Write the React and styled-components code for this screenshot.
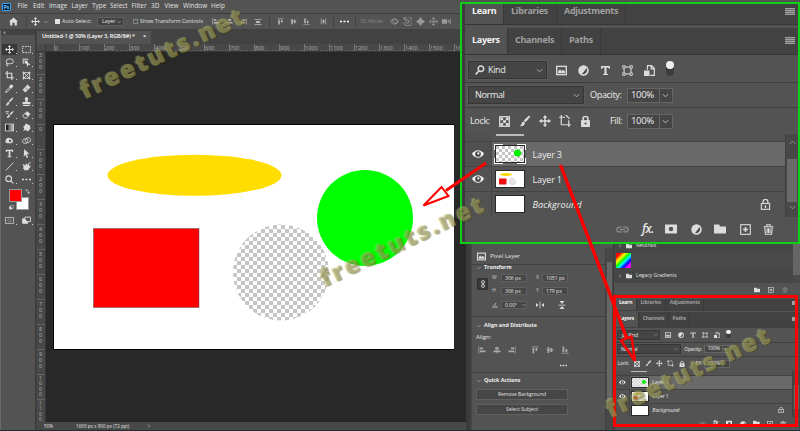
import React from 'react';
import styled, { createGlobalStyle, css } from 'styled-components';

const Global = createGlobalStyle`
  * { box-sizing: border-box; }
  body { margin: 0; background: #282828; overflow: hidden; }
  svg { display: block; flex: none; }
`;

const sans = '"Open Sans", "Noto Sans", sans-serif';
/* Layers panel dimensions are multiples of --u so it can be shown at two scales. */
const u = (n) => `calc(var(--u) * ${n})`;

const line = { fill: 'none', stroke: 'currentColor', strokeWidth: 1.6 };
const glyphs = {
  move: <path d="M8 0l3 3.500H9V7h3.500V5L16 8l-3.500 3V9H9v3.500h2L8 16l-3-3.500h2V9H3.500v2L0 8l3.500-3v2H7V3.500H5z" fill="currentColor" />,
  marquee: <rect x="1" y="2.500" width="14" height="11" {...line} strokeDasharray="3 1.500" />,
  lasso: <g {...line}><ellipse cx="8.500" cy="6" rx="6.500" ry="4.500" /><path d="M4 9c-3 1-2 4 0 3s1 3-1 3" /></g>,
  objsel: <g><path d="M1 1h10v3H4v6H1z" fill="currentColor" opacity=".7" /><rect x="5" y="5" width="5" height="5" fill="currentColor" /><path d="M8 6l7 6-4 .3L9 16z" fill="currentColor" /></g>,
  crop: <path d="M4 0v12h12M0 4h12v12" {...line} strokeWidth="2" />,
  frame: <path d="M1 3h14M1 13h14M2.500 1v14M13.500 1v14M3 3l10 10M13 3L3 13" {...line} />,
  dropper: <g><path d="M10 1.500c2-2 6 2 4 4l-3 3-4-4z" fill="currentColor" /><path d="M8.500 5.500L2 12l-1 3 3-1 6.500-6.500" {...line} /></g>,
  heal: <g><path d="M10 1l5 5-9 9-5-5z" fill="currentColor" /><path d="M7 6l4 4M5.500 8l3 3" stroke="#535353" /></g>,
  brush: <g><path d="M14.500 1c1.500 1-4 7-6 8.500L6.500 7.500C8 5.500 13 0 14.500 1z" fill="currentColor" /><path d="M6 8.500l2 2c-1 4-4 4.500-7 4.500 3-2 2-5.500 5-6.500z" fill="currentColor" /></g>,
  stamp: <path d="M8 0a3.500 3.500 0 0 1 2 6v3h5v4H1V9h5V6a3.500 3.500 0 0 1 2-6zM2 14h12v2H2z" fill="currentColor" />,
  history: <g><path d="M15 2c1 1-3 5-5 7L8 7c1-1 6-6 7-5zM7 8l2 2c-1 3-3 4-6 4 2-2 1-5 4-6z" fill="currentColor" /><path d="M1 3h6M2 6h4" {...line} /></g>,
  eraser: <g><path d="M9 2l6 5-4 4-6-5z" fill="currentColor" /><path d="M5 6l6 5-2.500 3H5l-4-3z" {...line} /></g>,
  gradient: <g><rect x="1" y="2" width="14" height="12" {...line} /><path d="M2 3h3v10H2z" fill="#111" /><path d="M5 3h3v10H5z" fill="#555" /><path d="M8 3h3v10H8z" fill="#888" /><path d="M11 3h3v10h-3z" fill="#bbb" /></g>,
  smudge: <path d="M6 1l8 3 1 6-5 5-4-3-4 3 2-5-2-4 3-1z" fill="currentColor" />,
  blob: <g><path d="M1 8c1-5 6-6 8-4 6 0 7 9 1 9S0 13 1 8z" fill="currentColor" /><circle cx="9" cy="8.500" r="2" fill="#444" /></g>,
  pen: <g {...line}><path d="M1 9c0-4 7-6 9-2s-3 7-6 6-3-3-3-4zM6 8c0-5 7-6 9-3s-2 7-5 7-4-2-4-4z" /></g>,
  type: <path d="M1.500 1.500h13v4h-1.700L12 3.500H9.500v9.300l2 .4v1.300h-7v-1.300l2-.4V3.500H4L3.200 5.500H1.500z" fill="currentColor" />,
  arrow: <path d="M4 0l9 9-4.500.5L11 15l-2.500 1L6 10.500 3 13.500z" fill="currentColor" />,
  slash: <path d="M1.500 15L15 1" {...line} />,
  hand: <path d="M3 8L1 5l2-1 3 3 0-4 2-.5 1 3.500 2-4 2 1-1 4 3-1v2l-4 6-6 1-3-4zM12 1l3-1v3z" fill="currentColor" />,
  search: <g {...line} strokeWidth="2.400"><circle cx="9.500" cy="6" r="4.500" /><path d="M6.300 9.500L1 15" /></g>,
  zoom: <g {...line} strokeWidth="2"><circle cx="6.500" cy="6.500" r="5" /><path d="M10 10l5 5" /></g>,
  dots: <path d="M0 6.500h3.500v3H0zM6.200 6.500h3.500v3H6.200zM12.500 6.500H16v3h-3.500z" fill="currentColor" />,
  mask: <g><rect x="1" y="2.500" width="14" height="11" {...line} /><circle cx="8" cy="8" r="3" {...line} strokeDasharray="1.500 1" /></g>,
  screens: <g {...line}><path d="M5 2h10v8H5z" /><path d="M5 5H1v8h9v-3" fill="currentColor" /></g>,
  home: <path d="M8 1l8 7h-2v7h-4v-5H6v5H2V8H0z" fill="currentColor" />,
  chev: <path d="M2 5l6 6 6-6" {...line} strokeWidth="2" />,
  chevUp: <path d="M2 11l6-6 6 6" {...line} strokeWidth="2" />,
  chevR: <path d="M5 2l6 6-6 6" {...line} strokeWidth="2" />,
  alignL: <path d="M1 1h1.500v14H1zM4 3h6v3.500H4zM4 9h11v3.500H4z" fill="currentColor" />,
  alignC: <path d="M7.200 1h1.600v2H12v3.500H8.800V9H15v3.500H8.800V15H7.200v-2.500H1V9h6.200V6.500H4V3h3.200z" fill="currentColor" />,
  alignR: <path d="M13.500 1H15v14h-1.500zM6 3h6v3.500H6zM1 9h11v3.500H1z" fill="currentColor" />,
  alignT: <path d="M1 1h14v1.500H1zM3 4h3.500v11H3zM9 4h3.500v6H9z" fill="currentColor" />,
  alignM: <path d="M1 7.200h2V2h3.500v5.200H9V4h3.500v3.200H15v1.600h-2.500V12H9V8.800H6.500V14H3V8.800H1z" fill="currentColor" />,
  alignB: <path d="M1 13.500h14V15H1zM3 1h3.500v11H3zM9 6h3.500v6H9z" fill="currentColor" />,
  distV: <path d="M1 2h14v1.500H1zM4 6h8v4H4zM1 12.500h14V14H1z" fill="currentColor" />,
  distH: <path d="M2 1h1.500v14H2zM6 4h4v8H6zM12.500 1H14v14h-1.500z" fill="currentColor" />,
  orbit: <g {...line}><path d="M1 8c3-6 11-6 13 0M15 8c-3 6-11 6-13 0M4 7l6 5 4-5-6-4z" /></g>,
  roll: <g {...line}><circle cx="8" cy="8" r="3" /><path d="M2 3a8 8 0 1 1-1 7M2 0v4h4" /></g>,
  slide: <path d="M8 0l3 4H5zM8 16l3-4H5zM0 8l4-3v6zM16 8l-4-3v6zM6 6h4v4H6z" fill="currentColor" />,
  diamond: <path d="M8 0l3 4-1 2 2-1 4 3-4 3-2-1 1 2-3 4-3-4 1-2-2 1-4-3 4-3 2 1-1-2z" fill="currentColor" />,
  camera: <path d="M0 4h9v8H0zM10 7l3-2v6l-3-2zM14 3h1.500v10H14z" fill="currentColor" />,
  image: <g><rect x="1" y="2" width="14" height="12" {...line} strokeWidth="2" /><path d="M3 12V9l3-3 2 3 2-2 3 2v3z" fill="currentColor" /></g>,
  adjust: <g><circle cx="8" cy="8" r="6.800" {...line} fill="currentColor" /><path d="M12.600 4.500A6 6 0 0 1 6 13.200z" fill="#474747" /></g>,
  shape: <g {...line}><rect x="3" y="3" width="10" height="10" /><path d="M1 1h3.500v3.500H1zM11.500 1H15v3.500h-3.500zM1 11.500h3.500V15H1zM11.500 11.500H15V15h-3.500z" fill="#535353" strokeWidth="1.300" /></g>,
  smart: <g><path d="M5 7V1h6l4 4v10H9M10.500 1v4.500H15" {...line} strokeWidth="1.800" /><rect x="0" y="8" width="8" height="8" fill="currentColor" /></g>,
  checker: <g><rect x="1" y="1" width="14" height="14" {...line} strokeWidth="1.800" /><path d="M2 2h4v4H2zM10 2h4v4h-4zM6 6h4v4H6zM2 10h4v4H2zM10 10h4v4h-4z" fill="currentColor" /></g>,
  artboard: <path d="M3 0v13h13M0 3h8M13 7v9M9 0l5 5" {...line} />,
  lock: <g><rect x="1.500" y="6" width="13" height="10" fill="currentColor" /><path d="M4.500 7V4a3.500 3.500 0 0 1 7 0v3" {...line} strokeWidth="2.200" /><circle cx="8" cy="11" r="1.500" fill="#474747" /></g>,
  lockLine: <g {...line}><rect x="2" y="6.500" width="12" height="8.500" /><path d="M4.500 6V4a3.500 3.500 0 0 1 7 0v2M8 9v4" strokeWidth="1.800" /></g>,
  eye: <g><path d="M0 8c4-6.500 12-6.500 16 0-4 6.500-12 6.500-16 0z" fill="currentColor" /><circle cx="8" cy="8" r="3.800" fill="#474747" /><circle cx="8.500" cy="7.300" r="1.500" fill="currentColor" /></g>,
  link: <g {...line}><path d="M7 5H4a3 3 0 0 0 0 6h3M9 5h3a3 3 0 0 1 0 6H9M4.500 8h7" /></g>,
  chain: <g {...line}><rect x="5" y="1" width="6" height="6" rx="3" /><rect x="5" y="9" width="6" height="6" rx="3" /><path d="M8 5v6" /></g>,
  maskAdd: <path d="M0 2h16v12H0zM8 5a3 3 0 1 0 0 6 3 3 0 0 0 0-6z" fillRule="evenodd" fill="currentColor" />,
  folder: <path d="M0 2h7l1 2.500h8V14H0z" fill="currentColor" />,
  plus: <g {...line}><rect x="1" y="1" width="14" height="14" /><path d="M8 4.500v7M4.500 8h7" strokeWidth="2.200" /></g>,
  trash: <g {...line}><path d="M1 4h14M5.500 3.500V1h5v2.500M2.500 4l1 11h9l1-11" /><path d="M6 6v7M8 6v7M10.200 6v7" /></g>,
  angle: <g {...line}><path d="M15 14H1L11 2" /><path d="M7 7c3 1 4 4 4 7" /></g>,
  flipH: <path d="M0 4l5 4-5 4zM16 4l-5 4 5 4zM7.300 1h1.500v14H7.300z" fill="currentColor" />,
  flipV: <path d="M3 0h10L8 6zM3 16h10l-5-6zM1 7.300h14v1.500H1z" fill="currentColor" />,
  swap: <path d="M5 1v4h6v6h4l-5 5M5 0L1 4l4 4M7 10l4 5 4-5" {...line} />,
};

const Svg = styled.svg`
  width: ${(p) => p.$w};
  height: ${(p) => p.$w};
  color: ${(p) => p.$c || '#dcdcdc'};
`;
const Icon = ({ n, w = '8px', c }) => <Svg viewBox="0 0 16 16" $w={w} $c={c}>{glyphs[n]}</Svg>;

/* ---------- application frame ---------- */
const Screen = styled.div`
  position: relative;
  width: 800px;
  height: 431px;
  overflow: hidden;
  display: grid;
  grid-template-rows: 13px 17px 400px 1px;
  background: #1d3036;
  color: #e2e2e2;
  font: 6px/1 ${sans};
  white-space: nowrap;
`;
const MenuBar = styled.nav`
  display: flex;
  align-items: center;
  background: #535353;
  padding-left: 2px;
  font-size: 6.400px;
`;
const Logo = styled.div`
  width: 9px;
  height: 8px;
  border: 1px solid #31a8ff;
  border-radius: 1px;
  background: #001e36;
  color: #7cc8ff;
  font: bold 5px/6px ${sans};
  text-align: center;
  margin-right: 6.500px;
`;
const MenuItem = styled.span`width: ${(p) => p.$w}px;`;
const OptionsBar = styled.div`
  display: flex;
  align-items: center;
  background: #535353;
  border-top: 1px solid #3d3d3d;
  border-bottom: 1px solid #414141;
  padding-left: 9px;
  font-size: 5.300px;
`;
const Slot = styled.div`
  width: ${(p) => p.$w}px;
  flex: none;
  display: flex;
  align-items: center;
  color: ${(p) => (p.$dim ? '#858585' : '#e2e2e2')};
`;
const Check = styled.span`
  width: 5px;
  height: 5px;
  border: 1px solid ${(p) => (p.$on ? '#e0e0e0' : '#858585')};
  background: ${(p) => (p.$on ? '#e0e0e0' : 'transparent')};
  margin-right: 2px;
`;
const Select = styled.div`
  width: 27px;
  height: 9px;
  display: flex;
  align-items: center;
  justify-content: space-between;
  padding: 0 2px 0 4px;
  background: #424242;
  border: 1px solid #5e5e5e;
`;
const Sep = styled.i`width: 1px; height: 13px; background: #434343; margin-right: ${(p) => p.$r || 0}px;`;

const Workspace = styled.main`
  display: grid;
  grid-template-columns: 36px 430px 5px 142px 1fr;
  background: #383838;
  min-height: 0;
`;

/* ---------- toolbox ---------- */
const Toolbox = styled.aside`
  background: #535353;
  border-left: 1px solid #6a6a6a;
  border-right: 1px solid #3c3c3c;
  display: flex;
  flex-direction: column;
`;
const ToolboxTop = styled.div`
  height: 13px;
  color: #ddd;
  font-size: 6px;
  line-height: 4px;
  padding-left: 2px;
  background: linear-gradient(#424242 5px, #535353 5px);
`;
const ToolGrid = styled.div`
  display: grid;
  grid-template-columns: 17px 16px;
  grid-auto-rows: 13px;
`;
const Tool = styled.div`
  position: relative;
  display: grid;
  place-items: center;
  margin: 1px;
  background: ${(p) => (p.$on ? '#383838' : 'transparent')};
  &::after {
    content: '';
    position: absolute;
    right: 0;
    bottom: 1px;
    width: 1px;
    height: 1px;
    background: #ccc;
  }
`;
const Swatches = styled.div`
  position: relative;
  height: 27px;
  margin-left: 8px;
  margin-top: 1px;
`;
const Swatch = styled.i`
  position: absolute;
  left: ${(p) => p.$x}px;
  top: ${(p) => p.$y}px;
  width: 13px;
  height: 13px;
  background: ${(p) => p.$c};
  border: 1px solid #999;
`;
const SwapMark = styled.div`position: absolute; left: ${(p) => p.$x}px; top: ${(p) => p.$y}px;`;

/* ---------- document ---------- */
const Doc = styled.section`
  display: grid;
  grid-template-columns: 9px 1fr;
  grid-template-rows: 14px 8px 370px 8px;
  padding-left: 1px;
  background: #424242;
  min-width: 0;
`;
const TabStrip = styled.div`grid-column: 1 / -1; display: flex; padding-top: 1px;`;
const DocTab = styled.div`
  width: 114px;
  padding: 0 5px 1px;
  display: flex;
  justify-content: space-between;
  align-items: center;
  background: #535353;
  font-weight: 600;
  font-size: 5.550px;
  letter-spacing: -0.130px;
  color: #fff;
`;
const Corner = styled.div`background: #4b4b4b; border: solid #3a3a3a; border-width: 0 1px 1px 0;`;
const RulerH = styled.div`
  display: flex;
  padding-left: 8px;
  background: #484848;
  border-bottom: 1px solid #383838;
  overflow: hidden;
  font: 5.500px/9px "Noto Sans", sans-serif;
  color: #aaa;
`;
const TickH = styled.span`
  width: 25px;
  flex: none;
  border-left: 1px solid #777;
  background: repeating-linear-gradient(90deg, #676767 0 1px, transparent 1px 2.500px) bottom / 100% 1px no-repeat;
`;
const RulerV = styled.div`
  background: #484848;
  border-right: 1px solid #383838;
  overflow: hidden;
  font: 5.300px/6px "Noto Sans", sans-serif;
  color: #aaa;
`;
const TickV = styled.span`
  display: flex;
  flex-direction: column;
  height: ${(p) => p.$h || 25}px;
  padding: 1px 0 0 2px;
  border-top: 1px solid #646464;
  ${(p) => p.$long && css`font-size: 4.800px; line-height: 5.300px;`}
  ${(p) => p.$h && css`border: 0; padding-top: 0;`}
`;
const Pasteboard = styled.div`background: #282828; padding: 72px 0 0 7px;`;
const Artboard = styled.div`
  width: 401px;
  height: 226px;
  border: 1px solid #050505;
  border-right: 0;
  background: #fff;
  svg { width: 400px; height: 225px; }
`;
const Status = styled.footer`
  grid-column: 1 / -1;
  display: flex;
  align-items: center;
  background: #484848;
  padding-left: 7px;
  font-size: 4.600px;
`;

const Gutter = styled.div`background: #3b3b3b; border-right: 1px solid #444;`;

/* ---------- properties ---------- */
const Properties = styled.section`
  background: #535353;
  display: grid;
  grid-template-columns: 1fr 8px;
  padding-top: 218px;
  border-left: 1px solid #464646;
`;
const PropBody = styled.div`min-width: 0;`;
const PropRow = styled.div`
  display: flex;
  align-items: center;
  height: ${(p) => p.$h}px;
  padding-left: ${(p) => p.$l || 5}px;
  gap: ${(p) => p.$g || 0}px;
  ${(p) => p.$line && css`border-top: 1px solid #424242;`}
  ${(p) => p.$bold && css`font-weight: 700; font-size: 5.300px; color: #eee;`}
  ${(p) => p.$pt && css`padding-top: ${p.$pt}px;`}
`;
const Fields = styled.div`
  display: grid;
  grid-template-columns: 15px 9px 35px 6px 26px;
  grid-template-rows: 13px 13px 15px;
  align-items: center;
  padding-left: 5px;
  height: 45px;
  color: #ccc;
  font-size: 5.100px;
`;
const ChainBox = styled.div`
  grid-row: 1 / 3;
  width: 11px;
  height: 12px;
  display: grid;
  place-items: center;
  background: #383838;
  border: 1px solid #303030;
`;
const Input = styled.div`
  width: 26px;
  height: 8px;
  line-height: 6px;
  padding-left: 3px;
  display: flex;
  justify-content: space-between;
  align-items: center;
  color: #e6e6e6;
  background: #464646;
  border: 1px solid #5f5f5f;
`;
const PropButton = styled.div`
  width: 92px;
  height: 11px;
  margin: 0 0 3.500px 4px;
  background: #464646;
  border: 1px solid #606060;
  text-align: center;
  line-height: 9px;
  font-size: 5px;
`;
const ScrollTrack = styled.div`background: #484848; border-left: 1px solid #404040; padding: 9px 1px; color: #777;`;
const ScrollThumb = styled.div`height: ${(p) => p.$h}; margin-top: ${(p) => p.$mt || '5px'}; background: #666;`;

/* ---------- right dock ---------- */
const Dock = styled.section`
  background: #535353;
  border-left: 1px solid #3a3a3a;
  padding-top: 208px;
  overflow: hidden;
`;
const GradientList = styled.div`
  display: grid;
  grid-template-columns: 1fr 7px;
  height: 45px;
  background: #4a4a4a;
`;
const GradientRow = styled.div`
  height: 15px;
  display: flex;
  align-items: center;
  gap: 4px;
  padding-left: 4px;
  background: #464646;
  font-size: 5.100px;
`;
const Rainbow = styled.div`
  width: 15px;
  height: 15px;
  margin-left: 2px;
  background: linear-gradient(135deg, #f00 15%, #ff0 32%, #0f0 47%, #0ff 57%, #00f 72%, #f0f 85%, #f0f);
`;
const GradientFoot = styled.div`
  height: 13px;
  display: flex;
  justify-content: flex-end;
  align-items: center;
  gap: 8px;
  padding-right: 12px;
`;
const Spacer = styled.div`height: 3px;`;
const DockedLayers = styled.div`padding-left: 1px; background: #444;`;

/* ---------- layers panel ---------- */
const Panel = styled.div`
  --u: ${(p) => p.$u}px;
  width: ${u(333)};
  height: ${u(238)};
  background: #535353;
  display: flex;
  flex-direction: column;
  font: 500 ${u(9.1)}/1 ${sans};
  letter-spacing: ${u(-0.38)};
  color: #ececec;
  overflow: hidden;
`;
const Tabs = styled.div`
  display: flex;
  height: ${(p) => u(p.$h)};
  flex: none;
  background: #424242;
  margin-bottom: ${(p) => u(p.$mb || 0)};
  box-shadow: 0 ${u(1)} 0 #353535;
`;
const Tab = styled.div`
  width: ${(p) => u(p.$w)};
  padding-left: ${(p) => u(p.$l)};
  display: flex;
  align-items: center;
  padding-bottom: ${(p) => u(p.$up || 0)};
  font-weight: 700;
  font-size: ${u(9)};
  letter-spacing: ${u(-0.3)};
  color: ${(p) => (p.$on ? '#f5f5f5' : '#a0a0a0')};
  background: ${(p) => (p.$on ? '#535353' : '#424242')};
  border-right: ${u(1)} solid #383838;
`;
const Burger = styled.i`
  width: ${u(10)};
  height: ${u(7)};
  margin: ${(p) => u(p.$t)} ${u(3)} 0 auto;
  background: repeating-linear-gradient(#a0a0a0 0 ${u(1)}, #6c6c6c ${u(1)} ${u(2)});
`;
const PRow = styled.div`
  height: ${(p) => u(p.$h)};
  flex: none;
  display: flex;
  align-items: center;
  padding-left: ${(p) => u(p.$l ?? 3)};
  padding-top: ${(p) => u(p.$pt || 0)};
  border-bottom: ${(p) => (p.$line ? u(1) : 0)} solid #3f3f3f;
`;
const Cell = styled.div`
  width: ${(p) => u(p.$w)};
  flex: none;
  display: flex;
  align-items: center;
`;
const Drop = styled.div`
  width: ${(p) => u(p.$w)};
  height: ${u(17.5)};
  margin-right: ${(p) => u(p.$r)};
  flex: none;
  display: flex;
  align-items: center;
  justify-content: space-between;
  padding: 0 ${u(3)} 0 ${u(6)};
  background: #454545;
  border: ${u(1)} solid #363636;
  box-shadow: 0 0 0 ${u(0.6)} #606060;
`;
const DropLabel = styled.span`display: flex; gap: ${u(3)}; align-items: center;`;
const Percent = styled.div`
  width: ${u(46)};
  height: ${u(15)};
  display: flex;
  align-items: center;
  justify-content: space-between;
  padding: 0 ${u(3)} 0 ${u(3.5)};
  font-size: ${u(9.6)};
  border: ${u(1)} solid #656565;
  background: linear-gradient(90deg, #454545 ${u(31)}, #656565 ${u(31)} ${u(32)}, #454545 ${u(32)});
`;
const Toggle = styled.div`
  width: ${u(8)};
  height: ${u(15)};
  border-radius: ${u(4)};
  background: #3d3d3d;
  margin-top: ${u(-4)};
  &::before {
    content: '';
    display: block;
    width: ${u(8)};
    height: ${u(8)};
    border-radius: 50%;
    background: #f0f0f0;
  }
`;
const ListArea = styled.div`
  display: grid;
  grid-template-columns: 1fr ${u(13)};
  height: ${u(83)};
  flex: none;
  border-bottom: ${u(1)} solid #404040;
`;
const Rows = styled.div`min-width: 0;`;
const Remnant = styled.div`
  height: ${u(7)};
  border-left: ${u(27)} solid #505050;
  &::before {
    content: '';
    display: block;
    width: ${u(28)};
    height: ${u(1.5)};
    margin-left: ${u(4)};
    background: #bbb;
  }
`;
const LayerRow = styled.div`
  height: ${u(25.2)};
  display: flex;
  align-items: center;
  border-top: ${u(1)} solid #434343;
  background: ${(p) => (p.$on ? `linear-gradient(90deg, #505050 ${u(27)}, #6a6a6a ${u(27)})` : '#535353')};
`;
const EyeCell = styled.div`
  width: ${u(27)};
  height: 100%;
  display: flex;
  align-items: center;
  padding-left: ${u(7)};
  border-right: ${u(1)} solid #454545;
`;
const Thumb = styled.div`
  width: ${u(32)};
  height: ${u(20)};
  margin: 0 ${u(6.5)} 0 ${u(2)};
  padding: ${u(2)};
  ${(p) => p.$on && css`
    background:
      linear-gradient(#fff 0 0) left top / ${u(9)} ${u(1)},
      linear-gradient(#fff 0 0) right top / ${u(9)} ${u(1)},
      linear-gradient(#fff 0 0) left bottom / ${u(9)} ${u(1)},
      linear-gradient(#fff 0 0) right bottom / ${u(9)} ${u(1)},
      linear-gradient(#fff 0 0) left top / ${u(1)} ${u(6)},
      linear-gradient(#fff 0 0) left bottom / ${u(1)} ${u(6)},
      linear-gradient(#fff 0 0) right top / ${u(1)} ${u(6)},
      linear-gradient(#fff 0 0) right bottom / ${u(1)} ${u(6)};
    background-repeat: no-repeat;
  `}
  svg { width: ${u(28)}; height: ${u(16)}; background: #fff; outline: ${u(1)} solid #292929; }
`;
const LayerName = styled.span`
  flex: 1;
  padding-top: ${u(1)};
  font-style: ${(p) => (p.$italic ? 'italic' : 'normal')};
  letter-spacing: ${(p) => u(p.$italic ? 0.08 : -0.2)};
`;
const LockCell = styled.span`margin-right: ${u(14)};`;
const ListScroll = styled.div`
  background: #484848;
  border-left: ${u(1)} solid #404040;
  padding: ${u(5)} ${u(1)} 0 ${u(1)};
  display: flex;
  flex-direction: column;
  align-items: center;
`;
const ListThumb = styled.div`width: ${u(10)}; height: ${u(43)}; margin: ${u(13)} 0 ${u(2)}; background: #6a6a6a;`;
const Fx = styled.span`font: italic 600 ${u(12)}/1 ${sans}; letter-spacing: ${u(-0.6)};`;

const Thumbnail = ({ kind }) => (
  <svg viewBox="0 0 28 16" preserveAspectRatio="none">
    {kind === 'green' && (
      <>
        <defs>
          <pattern id="tc" width="6" height="6" patternUnits="userSpaceOnUse">
            <rect width="6" height="6" fill="#fff" /><path d="M0 0h3v3H0zM3 3h3v3H3z" fill="#c4c4c4" />
          </pattern>
        </defs>
        <rect width="28" height="16" fill="url(#tc)" />
        <circle cx="21.500" cy="7" r="3.600" fill="#00f000" />
      </>
    )}
    {kind === 'all' && (
      <>
        <ellipse cx="10" cy="3.500" rx="6" ry="1.500" fill="#ffd800" />
        <path d="M3 7.500h7.500v6H3z" fill="#f01010" />
        <circle cx="16.500" cy="10.500" r="3.400" fill="#e3e3e8" stroke="#bbb" strokeWidth=".5" strokeDasharray="1 1" />
        <circle cx="21.500" cy="7" r="3.300" fill="#fff" />
      </>
    )}
  </svg>
);

const Pct = () => <Percent>100%<Icon n="chev" w={u(7)} c="#ccc" /></Percent>;

const LayersPanel = ({ scale }) => (
  <Panel $u={scale}>
    <Tabs $h={20} $mb={4}>
      <Tab $w={39} $l={7} $up={8} $on>Learn</Tab>
      <Tab $w={53} $l={7} $up={8}>Libraries</Tab>
      <Tab $w={69} $l={7} $up={8}>Adjustments</Tab>
      <Burger $t={4} />
    </Tabs>
    <Tabs $h={26}>
      <Tab $w={43} $l={7} $up={4} $on>Layers</Tab>
      <Tab $w={54} $l={7} $up={4}>Channels</Tab>
      <Tab $w={39} $l={7} $up={4}>Paths</Tab>
      <Burger $t={9} />
    </Tabs>
    <PRow $h={29} $pt={4} $line>
      <Drop $w={79} $r={9}><DropLabel><Icon n="search" w={u(10)} />Kind</DropLabel><Icon n="chev" w={u(7)} c="#bbb" /></Drop>
      {['image', 'adjust', 'type', 'shape', 'smart'].map((n) => <Cell key={n} $w={22}><Icon n={n} w={u(11)} /></Cell>)}
      <Toggle />
    </PRow>
    <PRow $h={25} $line>
      <Drop $w={116} $r={6}>Normal<Icon n="chev" w={u(7)} c="#bbb" /></Drop>
      <Cell $w={36.5}>Opacity:</Cell>
      <Pct />
    </PRow>
    <PRow $h={26} $l={5}>
      <Cell $w={29}>Lock:</Cell>
      <Cell $w={20}><Icon n="checker" w={u(11)} /></Cell>
      <Cell $w={20}><Icon n="brush" w={u(12)} /></Cell>
      <Cell $w={20}><Icon n="move" w={u(12)} /></Cell>
      <Cell $w={21}><Icon n="artboard" w={u(12)} /></Cell>
      <Cell $w={30}><Icon n="lock" w={u(11)} /></Cell>
      <Cell $w={16.5}>Fill:</Cell>
      <Pct />
    </PRow>
    <ListArea>
      <Rows>
        <Remnant />
        <LayerRow $on>
          <EyeCell><Icon n="eye" w={u(12)} c="#f4f4f4" /></EyeCell>
          <Thumb $on><Thumbnail kind="green" /></Thumb><LayerName>Layer 3</LayerName>
        </LayerRow>
        <LayerRow>
          <EyeCell><Icon n="eye" w={u(12)} c="#f4f4f4" /></EyeCell>
          <Thumb><Thumbnail kind="all" /></Thumb><LayerName>Layer 1</LayerName>
        </LayerRow>
        <LayerRow>
          <EyeCell />
          <Thumb><Thumbnail /></Thumb><LayerName $italic>Background</LayerName>
          <LockCell><Icon n="lockLine" w={u(11)} /></LockCell>
        </LayerRow>
      </Rows>
      <ListScroll><Icon n="chevUp" w={u(7)} c="#999" /><ListThumb /><Icon n="chev" w={u(7)} c="#aaa" /></ListScroll>
    </ListArea>
    <PRow $h={24} $l={151}>
      <Cell $w={26}><Icon n="link" w={u(13)} c="#8b8b8b" /></Cell>
      <Cell $w={23}><Fx>fx.</Fx></Cell>
      <Cell $w={26}><Icon n="maskAdd" w={u(12)} /></Cell>
      <Cell $w={23}><Icon n="adjust" w={u(11)} /></Cell>
      <Cell $w={26}><Icon n="folder" w={u(12)} /></Cell>
      <Cell $w={23}><Icon n="plus" w={u(11)} /></Cell>
      <Icon n="trash" w={u(11)} />
    </PRow>
  </Panel>
);

/* ---------- annotations laid over the window ---------- */
const Callout = styled.div`
  position: absolute;
  left: 460px;
  top: 2px;
  width: 340px;
  height: 242px;
  padding-left: 3px;
  border: 2px solid #10cf18;
  background: #3b3b3b;
  overflow: hidden;
`;
const Marker = styled.div`
  position: absolute;
  left: 613px;
  top: 295px;
  width: 185px;
  height: 132px;
  border: 3px solid #f00;
`;
const Arrows = styled.svg`
  position: absolute;
  inset: 0;
  width: 800px;
  height: 431px;
`;
const Watermark = styled.span`
  position: absolute;
  left: ${(p) => p.$x}px;
  top: ${(p) => p.$y}px;
  transform-origin: 0 100%;
  transform: rotate(-25.500deg);
  font: 800 24px/25px "Open Sans", sans-serif;
  letter-spacing: 2.500px;
  color: rgba(180, 180, 105, 0.45);
  -webkit-text-stroke: 1px rgba(165, 165, 90, 0.3);
  text-shadow: 1px 1px 1px rgba(50, 50, 0, 0.4), -1px -1px 1px rgba(255, 255, 190, 0.14);
`;

const menus = [['File', 15.5], ['Edit', 16], ['Image', 22.5], ['Layer', 20.5], ['Type', 18], ['Select', 21.5], ['Filter', 19.5], ['3D', 13.5], ['View', 18.5], ['Window', 28], ['Help', 20]];
const tools = ['move', 'marquee', 'lasso', 'objsel', 'crop', 'frame', 'dropper', 'heal', 'brush', 'stamp', 'history', 'eraser', 'gradient', 'smudge', 'blob', 'pen', 'type', 'arrow', 'slash', 'hand', 'zoom', 'dots'];
const hTicks = Array.from({ length: 17 }, (_, i) => i * 100);
const vTicks = ['200', '100', '0', '100', '200', '300', '400', '500', '600', '700', '800', '900', '1000', '1100'];
const digits = (t) => t.split('').map((d, i) => <span key={i}>{d}</span>);

export default function App() {
  return (
    <Screen>
      <Global />
      <MenuBar>
        <Logo>Ps</Logo>
        {menus.map(([t, w]) => <MenuItem key={t} $w={w}>{t}</MenuItem>)}
      </MenuBar>
      <OptionsBar>
        <Slot $w={17}><Icon n="home" w="9px" /></Slot>
        <Sep $r={4} />
        <Slot $w={13}><Icon n="move" w="9px" /></Slot>
        <Slot $w={11}><Icon n="chev" w="4px" /></Slot>
        <Slot $w={42}><Check $on />Auto-Select:</Slot>
        <Slot $w={36}><Select>Layer<Icon n="chev" w="4px" /></Select></Slot>
        <Slot $w={79}><Check />Show Transform Controls</Slot>
        {['alignL', 'alignC', 'alignR'].map((n) => <Slot key={n} $w={14}><Icon n={n} w="7px" c="#bbb" /></Slot>)}
        <Slot $w={15}><Icon n="distV" c="#bbb" /></Slot>
        <Sep $r={7} />
        <Slot $w={13}><Icon n="alignT" w="7px" c="#bbb" /></Slot>
        <Slot $w={13}><Icon n="alignM" w="7px" c="#bbb" /></Slot>
        <Slot $w={17}><Icon n="alignB" w="7px" c="#bbb" /></Slot>
        <Slot $w={13}><Icon n="distH" w="7px" c="#bbb" /></Slot>
        <Sep $r={6} />
        <Slot $w={15}><Icon n="dots" w="9px" c="#fff" /></Slot>
        <Sep $r={4} />
        <Slot $w={30} $dim>3D Mode:</Slot>
        {['orbit', 'roll', 'diamond', 'slide', 'camera'].map((n) => <Slot key={n} $w={13}><Icon n={n} w="9px" c="#999" /></Slot>)}
      </OptionsBar>
      <Workspace>
        <Toolbox>
          <ToolboxTop>«</ToolboxTop>
          <ToolGrid>
            {tools.map((n, i) => <Tool key={n} $on={i === 0}><Icon n={n} w="9px" /></Tool>)}
          </ToolGrid>
          <Swatches>
            <Swatch $x={7} $y={10} $c="#fff" />
            <Swatch $x={0} $y={2} $c="#f00" />
            <SwapMark $x={16} $y={2}><Icon n="swap" w="5px" /></SwapMark>
            <SwapMark $x={0} $y={18}><Icon n="screens" w="5px" /></SwapMark>
          </Swatches>
          <ToolGrid>
            <Tool><Icon n="mask" w="9px" c="#bbb" /></Tool>
            <Tool><Icon n="screens" w="9px" /></Tool>
          </ToolGrid>
        </Toolbox>
        <Doc>
          <TabStrip><DocTab>Untitled-1 @ 50% (Layer 3, RGB/8#) *<span>×</span></DocTab></TabStrip>
          <Corner />
          <RulerH>{hTicks.map((t) => <TickH key={t}>{t}</TickH>)}</RulerH>
          <RulerV>
            <TickV $h={22}>{digits('300')}</TickV>
            {vTicks.map((t, k) => <TickV key={k} $long={t.length > 3}>{digits(t)}</TickV>)}
          </RulerV>
          <Pasteboard>
            <Artboard>
              <svg viewBox="54 125 400 225">
                <defs>
                  <pattern id="cb" width="8" height="8" patternUnits="userSpaceOnUse" x="1" y="1">
                    <rect width="8" height="8" fill="#fff" /><path d="M0 0h4v4H0zM4 4h4v4H4z" fill="#c6c6c6" />
                  </pattern>
                </defs>
                <ellipse cx="194.500" cy="175.300" rx="87" ry="20.500" fill="#fd0" />
                <rect x="93.500" y="228.500" width="105.500" height="79" fill="#f00" stroke="#555" strokeWidth=".5" />
                <circle cx="281" cy="272.500" r="48" fill="url(#cb)" />
                <circle cx="365" cy="218" r="48" fill="#0f0" />
              </svg>
            </Artboard>
          </Pasteboard>
          <Status>
            <Slot $w={32}>50%</Slot>
            <Slot $w={71}>1600 px x 900 px (72 ppi)</Slot>
            <Icon n="chevR" w="4px" />
          </Status>
        </Doc>
        <Gutter />
        <Properties>
          <PropBody>
            <PropRow $h={16} $g={4}><Icon n="image" w="9px" />Pixel Layer</PropRow>
            <PropRow $h={7} $g={3} $line $bold><Icon n="chev" w="4px" />Transform</PropRow>
            <Fields>
              <ChainBox><Icon n="chain" /></ChainBox>
              <span>W</span><Input>306 px</Input><span>X</span><Input>1051 px</Input>
              <span>H</span><Input>306 px</Input><span>Y</span><Input>179 px</Input>
              <span /><Icon n="angle" w="6px" /><Input>0.00°<Icon n="chev" w="4px" /></Input>
              <Icon n="flipH" /><PropRow $h={8} $l={16}><Icon n="flipV" /></PropRow>
            </Fields>
            <PropRow $h={17} $g={3} $line $bold $pt={1}><Icon n="chev" w="4px" />Align and Distribute</PropRow>
            <PropRow $h={7} $l={4}>Align:</PropRow>
            <PropRow $h={19} $l={6} $g={7}>
              <Icon n="alignL" c="#aaa" /><Icon n="alignC" c="#aaa" /><Icon n="alignR" c="#aaa" />
              <Slot $w={1} />
              <Icon n="alignT" c="#aaa" /><Icon n="alignM" c="#aaa" /><Icon n="alignB" c="#aaa" />
            </PropRow>
            <PropRow $h={13} $l={88}><Icon n="dots" w="7px" /></PropRow>
            <PropRow $h={17} $g={3} $line $bold><Icon n="chev" w="4px" />Quick Actions</PropRow>
            <PropButton>Remove Background</PropButton>
            <PropButton>Select Subject</PropButton>
          </PropBody>
          <ScrollTrack><ScrollThumb $h="140px" /></ScrollTrack>
        </Properties>
        <Dock>
          <GradientList>
            <div>
              <GradientRow><Icon n="chevR" w="4px" /><Icon n="folder" w="6px" />Neutrals</GradientRow>
              <Rainbow />
              <GradientRow><Icon n="chevR" w="4px" /><Icon n="folder" w="6px" />Legacy Gradients</GradientRow>
            </div>
            <ScrollThumb $h="36px" $mt="1px" />
          </GradientList>
          <GradientFoot><Icon n="folder" w="6px" /><Icon n="plus" w="6px" /><Icon n="trash" w="6px" c="#888" /></GradientFoot>
          <Spacer />
          <DockedLayers><LayersPanel scale={0.554} /></DockedLayers>
        </Dock>
      </Workspace>
      <Callout><LayersPanel scale={1} /></Callout>
      <Marker />
      <Arrows viewBox="0 0 800 431" fill="none" stroke="#f00">
        <path d="M486 163L446 190.500" strokeWidth="3" />
        <path d="M423.500 205.500L441.500 187L448.500 196z" strokeWidth="2" />
        <path d="M560.500 165L627 339" strokeWidth="3.400" />
        <path d="M635 361L621 340.500L631.500 336.500z" strokeWidth="2.400" />
      </Arrows>
      <Watermark $x={86} $y={77}>freetuts.net</Watermark>
      <Watermark $x={326} $y={265}>freetuts.net</Watermark>
      <Watermark $x={612} $y={396}>freetuts.net</Watermark>
    </Screen>
  );
}
